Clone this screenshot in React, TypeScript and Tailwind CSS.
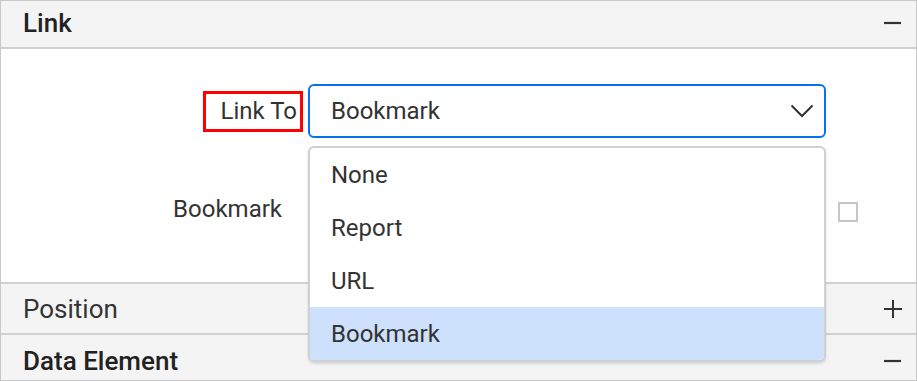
import React from "react";

const options = ["None", "Report", "URL", "Bookmark"];

function Minus() {
  return (
    <svg width="18" height="18" viewBox="0 0 18 18" className="block">
      <path d="M0 9 H17" stroke="#333" strokeWidth="2.2" />
    </svg>
  );
}

function Plus() {
  return (
    <svg width="18" height="18" viewBox="0 0 18 18" className="block">
      <path d="M0 9 H18 M9 0 V18" stroke="#333" strokeWidth="2" />
    </svg>
  );
}

function SectionHeader({
  title,
  open,
  bold,
  className,
}: {
  title: string;
  open: boolean;
  bold?: boolean;
  className: string;
}) {
  return (
    <div
      className={`flex shrink-0 items-center justify-between bg-[#f4f4f4] pl-[22px] pr-[14px] ${className}`}
    >
      <span
        className={`text-[26px] leading-none ${bold ? "font-medium text-[#222]" : "text-[#333]"}`}
      >
        {title}
      </span>
      {open ? <Minus /> : <Plus />}
    </div>
  );
}

export default function App() {
  return (
    <div className="relative w-[917px] h-[381px] overflow-hidden border border-[#c8c8c8] bg-white font-['Roboto',sans-serif] text-[#333]">
      <SectionHeader title="Link" open bold className="h-[48px] border-b-2 border-[#d0d0d0] pb-[3px]" />

      {/* Link properties */}
      <div className="h-[235px] border-b-2 border-[#d0d0d0] pt-[35px]">
        <div className="flex items-center">
          <div className="flex w-[307px] justify-end pr-[5px]">
            <div className="flex h-[41px] items-center border-[3px] border-[#ff0000] pl-[14px] pr-[3px] text-[24px] leading-none">
              Link To
            </div>
          </div>
          <div className="flex h-[54px] w-[518px] items-center justify-between rounded-[6px] border-2 border-[#0b6ff5] pl-[21px] pr-[10px]">
            <span className="text-[24px] leading-none">Bookmark</span>
            <svg width="24" height="14" viewBox="0 0 24 14">
              <path d="M1.5 1.5 L12 12 L22.5 1.5" fill="none" stroke="#333" strokeWidth="2" />
            </svg>
          </div>
        </div>

        <div className="mt-[44px] flex items-center">
          <div className="flex w-[307px] justify-end pr-[26px] text-[24px] leading-none">
            Bookmark
          </div>
          <div className="h-[54px] w-[518px] rounded-[6px] border-2 border-[#d0d0d0]" />
          <div className="ml-[12px] mt-[6px] h-[20px] w-[20px] border-2 border-[#c6c6c6] bg-white" />
        </div>
      </div>

      <SectionHeader title="Position" open={false} className="h-[51px] border-b-2 border-[#d0d0d0]" />
      <SectionHeader title="Data Element" open bold className="h-[51px]" />

      {/* Open dropdown popup */}
      <div className="absolute left-[307px] top-[145px] w-[518px] overflow-hidden rounded-[6px] border-2 border-[#d0d0d0] bg-white shadow-[0_2px_3px_rgba(0,0,0,0.12)]">
        {options.map((o) => (
          <div
            key={o}
            className={`flex h-[53px] items-center pl-[21px] text-[24px] leading-none ${o === "Bookmark" ? "bg-[#cde0fc]" : ""}`}
          >
            {o}
          </div>
        ))}
      </div>
    </div>
  );
}
